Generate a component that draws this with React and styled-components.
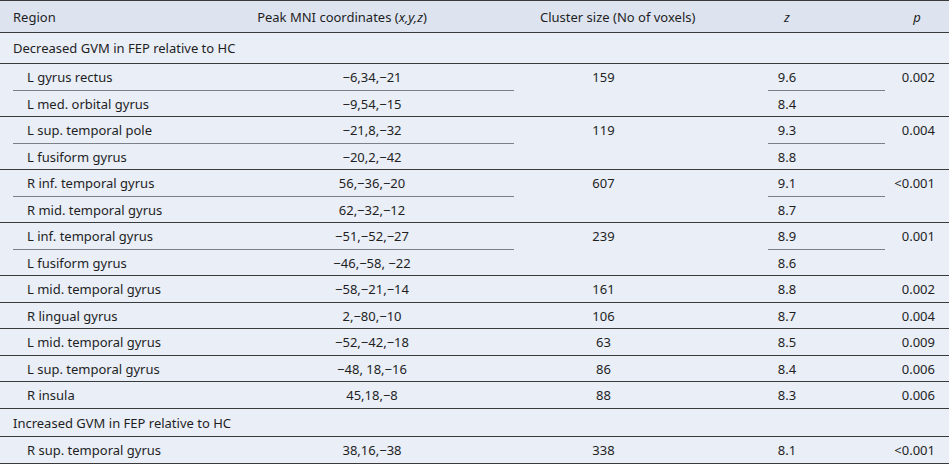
import React from 'react';
import styled, { createGlobalStyle, css } from 'styled-components';

const GlobalStyle = createGlobalStyle`
    html, body {
        margin: 0;
        padding: 0;
        background: #ffffff;
    }
`;

const Table = styled.table`
    width: 949px;
    table-layout: fixed;
    border-collapse: collapse;
    border-top: 1px solid #3a3a3a;
    background: #e9eef7;
    font-family: "Noto Sans", "Open Sans", sans-serif;
    font-size: 13px;
    line-height: 18px;
    color: #1f1f1f;
`;

const HeadRow = styled.tr`
    background: #dde4f0;
`;

const Th = styled.th`
    font-weight: normal;
    white-space: nowrap;
    padding: 6.5px 13px;
    border-bottom: 1px solid #3a3a3a;
    text-align: ${(p) => p.$align || 'center'};
    ${(p) => p.$shift && css`padding-right: ${13 + p.$shift}px;`}
`;

const SectionCell = styled.td`
    padding: ${(p) => (p.$tall ? '6.2px' : '4.7px')} 13px;
    border-bottom: 1px solid #3a3a3a;
    text-align: left;
    white-space: nowrap;
`;

const Td = styled.td`
    position: relative;
    padding: 3.75px 13px;
    vertical-align: top;
    white-space: nowrap;
    text-align: ${(p) => p.$align || 'center'};
    border-bottom: 1px solid ${(p) => (p.$split ? 'transparent' : '#3a3a3a')};
    ${(p) => p.$indent && css`padding-left: 27px;`}
    ${(p) => p.$padRight !== undefined && css`padding-right: ${p.$padRight}px;`}
    ${(p) => p.$padLeft !== undefined && css`padding-left: ${p.$padLeft}px;`}
    ${(p) =>
        p.$split &&
        css`
            &::after {
                content: '';
                position: absolute;
                left: ${p.$lineLeft || 0}px;
                right: ${p.$lineRight || 0}px;
                bottom: -1px;
                border-bottom: 1px solid #7c8088;
            }
        `}
`;

const groups = [
    { section: 'Decreased GVM in FEP relative to HC', tall: true },
    { cluster: '159', p: '0.002', items: [['L gyrus rectus', '−6,34,−21', '9.6'], ['L med. orbital gyrus', '−9,54,−15', '8.4']] },
    { cluster: '119', p: '0.004', items: [['L sup. temporal pole', '−21,8,−32', '9.3'], ['L fusiform gyrus', '−20,2,−42', '8.8']] },
    { cluster: '607', p: '<0.001', items: [['R inf. temporal gyrus', '56,−36,−20', '9.1'], ['R mid. temporal gyrus', '62,−32,−12', '8.7']] },
    { cluster: '239', p: '0.001', items: [['L inf. temporal gyrus', '−51,−52,−27', '8.9'], ['L fusiform gyrus', '−46,−58, −22', '8.6']] },
    { cluster: '161', p: '0.002', items: [['L mid. temporal gyrus', '−58,−21,−14', '8.8']] },
    { cluster: '106', p: '0.004', items: [['R lingual gyrus', '2,−80,−10', '8.7']] },
    { cluster: '63', p: '0.009', items: [['L mid. temporal gyrus', '−52,−42,−18', '8.5']] },
    { cluster: '86', p: '0.006', items: [['L sup. temporal gyrus', '−48, 18,−16', '8.4']] },
    { cluster: '88', p: '0.006', items: [['R insula', '45,18,−8', '8.3']] },
    { section: 'Increased GVM in FEP relative to HC' },
    { cluster: '338', p: '<0.001', items: [['R sup. temporal gyrus', '38,16,−38', '8.1']] },
];

function GroupRows({ group }) {
    const span = group.items.length;
    return group.items.map(([region, mni, z], i) => {
        const split = span > 1 && i < span - 1;
        return (
            <tr key={i}>
                <Td $align="left" $indent $split={split} $lineLeft={13}>{region}</Td>
                <Td $padLeft={43} $padRight={13} $split={split} $lineRight={13}>{mni}</Td>
                {i === 0 && <Td rowSpan={span}>{group.cluster}</Td>}
                <Td $split={split} $lineLeft={88} $lineRight={9}>{z}</Td>
                {i === 0 && <Td rowSpan={span} $align="right" $padLeft={0} $padRight={14}>{group.p}</Td>}
            </tr>
        );
    });
}

export default function App() {
    return (
        <>
            <GlobalStyle />
            <Table>
                <colgroup>
                    <col style={{ width: 187 }} />
                    <col style={{ width: 340 }} />
                    <col style={{ width: 153 }} />
                    <col style={{ width: 214 }} />
                    <col style={{ width: 55 }} />
                </colgroup>
                <thead>
                    <HeadRow>
                        <Th $align="left">Region</Th>
                        <Th $shift={30}>Peak MNI coordinates (<i>x,y,z</i>)</Th>
                        <Th>Cluster size (No of voxels)</Th>
                        <Th><i>z</i></Th>
                        <Th $shift={9}><i>p</i></Th>
                    </HeadRow>
                </thead>
                <tbody>
                    {groups.map((g, gi) =>
                        g.section ? (
                            <tr key={gi}>
                                <SectionCell colSpan={5} $tall={g.tall}>{g.section}</SectionCell>
                            </tr>
                        ) : (
                            <GroupRows key={gi} group={g} />
                        )
                    )}
                </tbody>
            </Table>
        </>
    );
}
